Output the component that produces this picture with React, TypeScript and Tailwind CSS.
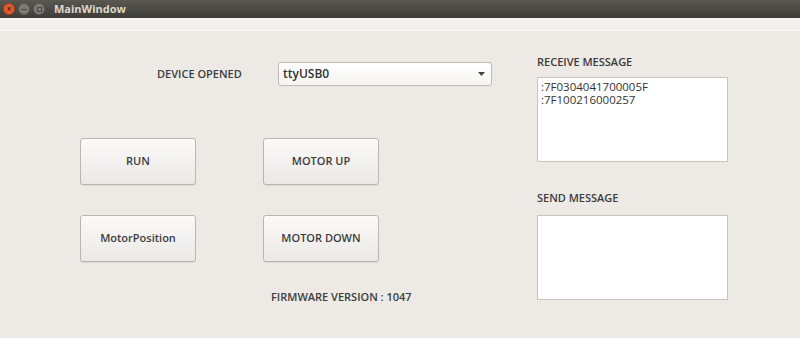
import { useState } from 'react';

function PushButton({ label }: { label: string }) {
    return (
        <button className="w-[116px] h-[47px] rounded-[3px] border border-[#b9b6b0] bg-gradient-to-b from-[#fbfaf9] to-[#ebe9e6] shadow-[0_1px_0_rgba(0,0,0,0.08)] text-[11px] font-semibold text-[#3c3c3c]">
            {label}
        </button>
    );
}

export default function App() {
    const [receive] = useState(':7F0304041700005F\n:7F100216000257');

    return (
        <div className="w-[800px] h-[338px] overflow-hidden bg-[#edeae6] flex flex-col font-['Open_Sans','Noto_Sans',sans-serif] text-[#3c3c3c]">
            {/* title bar */}
            <div className="h-[18px] bg-gradient-to-b from-[#5b5850] to-[#3d3c37] flex items-center pl-[3px] gap-[3px]">
                <div className="w-[12px] h-[12px] rounded-full bg-[#e45a2c] border border-[#a8401f] flex items-center justify-center text-[8px] leading-none text-[#5a2410] font-bold">×</div>
                <div className="w-[12px] h-[12px] rounded-full bg-[#7d7b74] border border-[#5f5d57] flex items-center justify-center">
                    <div className="w-[6px] h-[1px] bg-[#4b4a45]" />
                </div>
                <div className="w-[12px] h-[12px] rounded-full bg-[#7d7b74] border border-[#5f5d57] flex items-center justify-center">
                    <div className="w-[5px] h-[5px] border border-[#4b4a45]" />
                </div>
                <span className="ml-[6px] text-[11px] font-bold text-[#dcd8cf]">MainWindow</span>
            </div>
            {/* toolbar strip */}
            <div className="h-[13px] bg-[#f3f1ed] border-t border-[#fbfaf8] border-b border-[#d3d0ca]" />

            {/* content */}
            <div className="flex-1 flex">
                <div className="w-[537px] flex flex-col">
                    <div className="mt-[31px] flex items-center h-[24px]">
                        <span className="ml-[157px] w-[121px] text-[11px] font-semibold">DEVICE OPENED</span>
                        <div className="w-[214px] h-[24px] rounded-[3px] border border-[#bebbb5] bg-gradient-to-b from-white to-[#f6f5f3] flex items-center justify-between pl-[4px] pr-[6px]">
                            <span className="text-[12px] font-semibold text-[#333]">ttyUSB0</span>
                            <svg width="7" height="4" viewBox="0 0 7 4"><path d="M0 0h7L3.5 4z" fill="#444" /></svg>
                        </div>
                    </div>
                    <div className="mt-[52px] flex gap-[67px] pl-[80px]">
                        <PushButton label="RUN" />
                        <PushButton label="MOTOR UP" />
                    </div>
                    <div className="mt-[30px] flex gap-[67px] pl-[80px]">
                        <PushButton label="MotorPosition" />
                        <PushButton label="MOTOR DOWN" />
                    </div>
                    <div className="mt-[27px] pl-[271px] text-[11px] font-semibold">FIRMWARE VERSION : 1047</div>
                </div>
                <div className="flex flex-col">
                    <div className="mt-[23px] text-[11px] font-semibold h-[16px] leading-[16px]">RECEIVE MESSAGE</div>
                    <div className="mt-[7px] w-[191px] h-[85px] bg-white border border-[#c8c5bf] px-[3px] py-[2px] text-[11.5px] font-medium leading-[13px] whitespace-pre text-[#333]">
                        {receive}
                    </div>
                    <div className="mt-[28px] text-[11px] font-semibold h-[16px] leading-[16px]">SEND MESSAGE</div>
                    <div className="mt-[9px] w-[191px] h-[85px] bg-white border border-[#c8c5bf]" />
                </div>
            </div>
        </div>
    );
}
